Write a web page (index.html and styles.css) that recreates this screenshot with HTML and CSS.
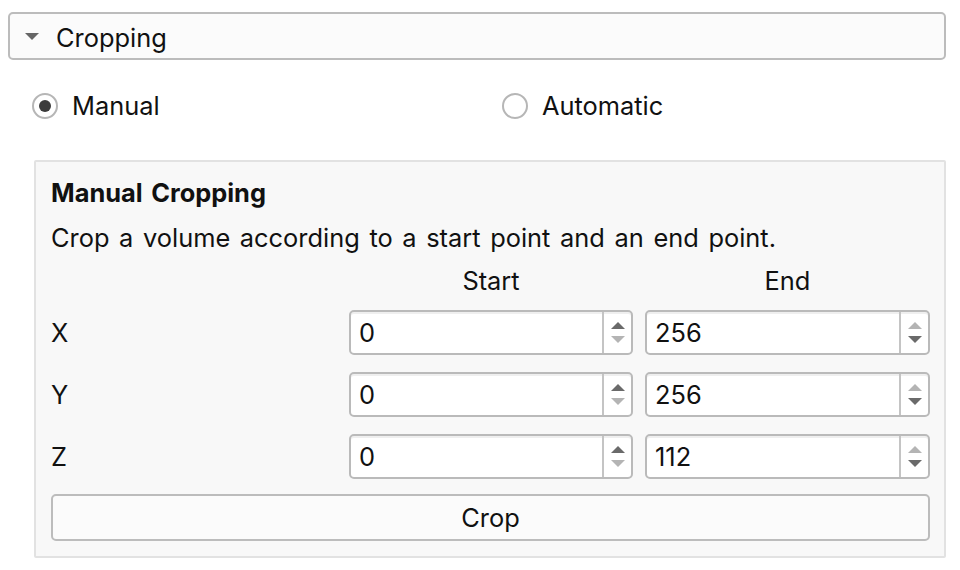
FILE: index.html
```html
<!DOCTYPE html>
<html>
<head>
<meta charset="utf-8">
<link rel="stylesheet" href="styles.css">
</head>
<body>
<div class="header">
  <span class="tri"></span>
  <span class="header-title">Cropping</span>
</div>
<div class="radios">
  <label class="radio"><span class="circle checked"></span><span>Manual</span></label>
  <label class="radio"><span class="circle"></span><span>Automatic</span></label>
</div>
<div class="panel">
  <div class="title">Manual Cropping</div>
  <div class="desc">Crop a volume according to a start point and an end point.</div>
  <div class="grid">
    <div></div>
    <div class="colhead">Start</div>
    <div class="colhead">End</div>

    <div class="axis">X</div>
    <div class="spin"><span class="val">0</span><span class="arrows"><span class="up"></span><span class="down off"></span></span></div>
    <div class="spin"><span class="val">256</span><span class="arrows"><span class="up off"></span><span class="down"></span></span></div>

    <div class="axis">Y</div>
    <div class="spin"><span class="val">0</span><span class="arrows"><span class="up"></span><span class="down off"></span></span></div>
    <div class="spin"><span class="val">256</span><span class="arrows"><span class="up off"></span><span class="down"></span></span></div>

    <div class="axis">Z</div>
    <div class="spin"><span class="val">0</span><span class="arrows"><span class="up"></span><span class="down off"></span></span></div>
    <div class="spin"><span class="val">112</span><span class="arrows"><span class="up off"></span><span class="down"></span></span></div>
  </div>
  <div class="button">Crop</div>
</div>
</body>
</html>
```
FILE: styles.css
```css
html, body {
  margin: 0;
  padding: 0;
  background: #ffffff;
}
body {
  font-family: Inter, "Noto Sans", "Liberation Sans", sans-serif;
  font-size: 25.4px;
  word-spacing: 2.5px;
  color: #111111;
  width: 960px;
  height: 570px;
  overflow: hidden;
}
.header {
  margin: 12px 14px 0 8px;
  height: 44px;
  border: 2px solid #bcbcbc;
  border-radius: 5px;
  background: #fbfbfb;
  display: flex;
  align-items: center;
  padding-left: 15px;
  box-sizing: content-box;
}
.tri {
  width: 0;
  height: 0;
  border-left: 7px solid transparent;
  border-right: 7px solid transparent;
  border-top: 7px solid #666666;
  margin-right: 17px;
  margin-top: 1px;
}
.header-title {
  line-height: 30px;
  padding-top: 3px;
}
.radios {
  display: grid;
  grid-template-columns: 470px 1fr;
  margin: 33px 0 41px 32px;
  height: 26px;
}
.radio {
  display: flex;
  align-items: center;
  gap: 14px;
  line-height: 26px;
}
.circle {
  width: 22px;
  height: 22px;
  border: 2px solid #b6b6b6;
  border-radius: 50%;
  background: #ffffff;
  display: flex;
  align-items: center;
  justify-content: center;
}
.circle.checked::after {
  content: "";
  width: 12px;
  height: 12px;
  border-radius: 50%;
  background: #3b3b3b;
}
.panel {
  margin: 0 14px 0 34px;
  border: 2px solid #e2e2e2;
  border-radius: 2px;
  background: #f8f8f8;
  padding: 16px 14px 15px 15px;
  display: flex;
  flex-direction: column;
}
.title {
  font-weight: 700;
  line-height: 30px;
}
.desc {
  line-height: 30px;
  margin-top: 15px;
}
.grid {
  display: grid;
  grid-template-columns: 1fr 284px 285px;
  column-gap: 12px;
  margin-top: 13px;
}
.colhead {
  text-align: center;
  line-height: 30px;
  margin-bottom: 14px;
}
.axis {
  display: flex;
  align-items: center;
  height: 45px;
  margin-bottom: 17px;
}
.spin {
  height: 41px;
  border: 2px solid #bababa;
  border-radius: 5px;
  background: #ffffff;
  box-shadow: inset 0 2px 0 #efefef;
  display: flex;
  align-items: center;
  margin-bottom: 17px;
}
.grid > .spin:nth-last-child(-n+2),
.grid > .axis:nth-last-child(3) {
  margin-bottom: 0;
}
.val {
  flex: 1;
  padding-left: 8px;
  line-height: 30px;
}
.arrows {
  width: 27px;
  height: 41px;
  border-left: 2px solid #c4c4c4;
  display: flex;
  flex-direction: column;
  align-items: center;
  justify-content: center;
  gap: 7px;
}
.up, .down {
  width: 0;
  height: 0;
  border-left: 7px solid transparent;
  border-right: 7px solid transparent;
}
.up {
  border-bottom: 7px solid #6a6a6a;
}
.down {
  border-top: 7px solid #6a6a6a;
}
.up.off {
  border-bottom-color: #b4b4b4;
}
.down.off {
  border-top-color: #b4b4b4;
}
.button {
  margin-top: 15px;
  height: 43px;
  border: 2px solid #bcbcbc;
  border-radius: 5px;
  background: #fbfbfb;
  display: flex;
  align-items: center;
  justify-content: center;
  line-height: 30px;
}
```
